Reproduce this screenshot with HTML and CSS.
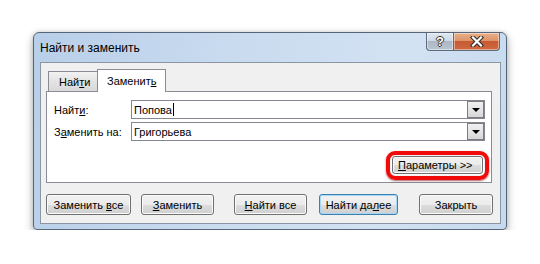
FILE: index.html
```html
<!DOCTYPE html>
<html lang="ru">
<head>
    <meta charset="UTF-8">
    <title>Найти и заменить</title>
    <link rel="stylesheet" href="styles.css">
</head>
<body>

<div class="window">
    <div class="titlebar">
        <span class="title">Найти и заменить</span>
        <div class="caption-btns">
            <div class="cap help">?</div>
            <div class="cap close">
                <svg width="14" height="11" viewBox="0 0 14 11">
                    <path d="M3 1.5 L11 9.5 M11 1.5 L3 9.5" stroke="#2b2b2b" stroke-width="4.2" stroke-linecap="square"/>
                    <path d="M3 1.5 L11 9.5 M11 1.5 L3 9.5" stroke="#ffffff" stroke-width="2.2" stroke-linecap="square"/>
                </svg>
            </div>
        </div>
    </div>

    <div class="client">
        <div class="tabs">
            <div class="tab">Най<u>т</u>и</div>
            <div class="tab active">Заменит<u>ь</u></div>
        </div>

        <div class="panel">
            <div class="row">
                <span class="label">Найт<u>и</u>:</span>
                <div class="combo">
                    <span class="value">Попова<span class="caret"></span></span>
                    <span class="drop"><span class="arrow"></span></span>
                </div>
            </div>
            <div class="row">
                <span class="label">З<u>а</u>менить на:</span>
                <div class="combo">
                    <span class="value">Григорьева</span>
                    <span class="drop"><span class="arrow"></span></span>
                </div>
            </div>
            <div class="params-row">
                <div class="highlight">
                    <button class="btn params"><u>П</u>араметры &gt;&gt;</button>
                </div>
            </div>
        </div>

        <div class="buttons">
            <button class="btn w-all">Заменить <u>в</u>се</button>
            <button class="btn w-replace"><u>З</u>аменить</button>
            <button class="btn w-findall"><u>Н</u>айти все</button>
            <button class="btn w-next default">Найти да<u>л</u>ее</button>
            <button class="btn w-close">Закрыть</button>
        </div>
    </div>
</div>

</body>
</html>
```

FILE: styles.css
```css
body {
    margin: 0;
    background: #ffffff;
    font-family: "Liberation Sans", Arial, sans-serif;
    font-size: 11px;
    color: #000;
}
u {
    text-decoration: underline;
    text-underline-offset: 1px;
}
.window {
    box-sizing: border-box;
    width: 474px;
    height: 198px;
    margin: 32px 0 0 33px;
    border: 1px solid #56667a;
    border-radius: 6px 6px 4px 4px;
    padding: 0 5px 6px 6px;
    background: linear-gradient(100deg, #b8cfe9 0%, #c9dbef 40%, #d3e2f3 75%, #c6d9ee 100%);
    box-shadow: 0 4px 10px rgba(0, 0, 0, 0.3), 0 0 4px rgba(0, 0, 0, 0.15);
}
.titlebar {
    height: 29px;
    display: flex;
    align-items: flex-start;
    justify-content: space-between;
}
.title {
    font-size: 12px;
    margin-top: 8px;
    color: #000;
}
.caption-btns {
    display: flex;
    margin-right: 1px;
}
.cap {
    box-sizing: border-box;
    height: 18px;
    border: 1px solid #5d6b7c;
    border-top: none;
    display: flex;
    align-items: center;
    justify-content: center;
    box-shadow: inset 0 0 0 1px rgba(255, 255, 255, 0.45);
}
.help {
    width: 27px;
    border-radius: 0 0 0 4px;
    border-right: none;
    background: linear-gradient(#dfe7f0 0%, #cfd9e5 45%, #aeb8c4 50%, #b9c5d2 100%);
    color: #fff;
    font-weight: bold;
    font-size: 13px;
    text-shadow: 1px 0 #333, -1px 0 #333, 0 1px #333, 0 -1px #333;
}
.close {
    width: 47px;
    border-radius: 0 0 4px 0;
    background: linear-gradient(#e9b08a 0%, #de9468 45%, #c85a34 50%, #d0693f 100%);
}
.client {
    box-sizing: border-box;
    height: 162px;
    border: 1px solid #8a96a4;
    background: #f0f0f0;
    padding: 6px 0 0 5px;
}
.tabs {
    display: flex;
    align-items: flex-end;
    height: 22px;
    margin-left: 2px;
    position: relative;
    z-index: 1;
}
.tab {
    box-sizing: border-box;
    height: 20px;
    width: 50px;
    border: 1px solid #898c95;
    border-bottom: none;
    background: linear-gradient(#f2f2f2, #e3e3e3 50%, #d9d9d9 100%);
    padding: 4px 0 0 10px;
}
.tab.active {
    width: 69px;
    height: 23px;
    margin-bottom: -1px;
    margin-left: -1px;
    background: #ffffff;
    padding: 5px 0 0 9px;
}
.panel {
    box-sizing: border-box;
    width: 446px;
    height: 92px;
    border: 1px solid #898c95;
    background: #ffffff;
    padding: 8px 6px 0 7px;
}
.row {
    display: flex;
    align-items: center;
    height: 19px;
    margin-bottom: 3px;
}
.label {
    width: 77px;
}
.combo {
    box-sizing: border-box;
    flex: 1;
    height: 19px;
    border: 1px solid #828790;
    display: flex;
    align-items: center;
    padding-left: 2px;
    padding-right: 0;
}
.value {
    flex: 1;
    display: flex;
    align-items: center;
}
.caret {
    display: inline-block;
    width: 1px;
    height: 13px;
    background: #000;
    margin-left: 1px;
}
.drop {
    box-sizing: border-box;
    width: 17px;
    height: 17px;
    border: 1px solid #7c7c7c;
    background: linear-gradient(#f0f0f0, #e4e4e4 55%, #d6d6d6);
    display: flex;
    align-items: center;
    justify-content: center;
}
.arrow {
    width: 0;
    height: 0;
    border-left: 4px solid transparent;
    border-right: 4px solid transparent;
    border-top: 4px solid #000;
    margin-top: 1px;
}
.params-row {
    display: flex;
    justify-content: flex-end;
    margin-top: 10px;
    margin-right: -4px;
}
.highlight {
    border: 4px solid #f00a0a;
    border-radius: 9px;
    padding: 1px 2px 2px 2px;
    box-shadow: 0 1px 2px rgba(120, 0, 0, 0.6), inset 0 0 1px rgba(120, 0, 0, 0.6);
}
.btn {
    box-sizing: border-box;
    height: 21px;
    border: 1px solid #707070;
    border-radius: 3px;
    background: linear-gradient(#f2f2f2 0%, #ebebeb 50%, #dddddd 51%, #cfcfcf 100%);
    box-shadow: inset 0 0 0 1px #fbfbfb;
    font-family: "Liberation Sans", Arial, sans-serif;
    font-size: 11px;
    color: #000;
    padding: 0;
}
.params {
    width: 91px;
    height: 18px;
    text-align: left;
    padding-left: 5px;
}
.buttons {
    display: flex;
    margin-top: 11px;
}
.w-all {
    width: 85px;
}
.w-replace {
    width: 73px;
    margin-left: 10px;
}
.w-findall {
    width: 73px;
    margin-left: 20px;
}
.w-next {
    width: 79px;
    margin-left: 12px;
}
.w-close {
    width: 74px;
    margin-left: 21px;
}
.btn.default {
    border-color: #3c7fb1;
    box-shadow: inset 0 0 0 1px #a6d8f5;
}
```
